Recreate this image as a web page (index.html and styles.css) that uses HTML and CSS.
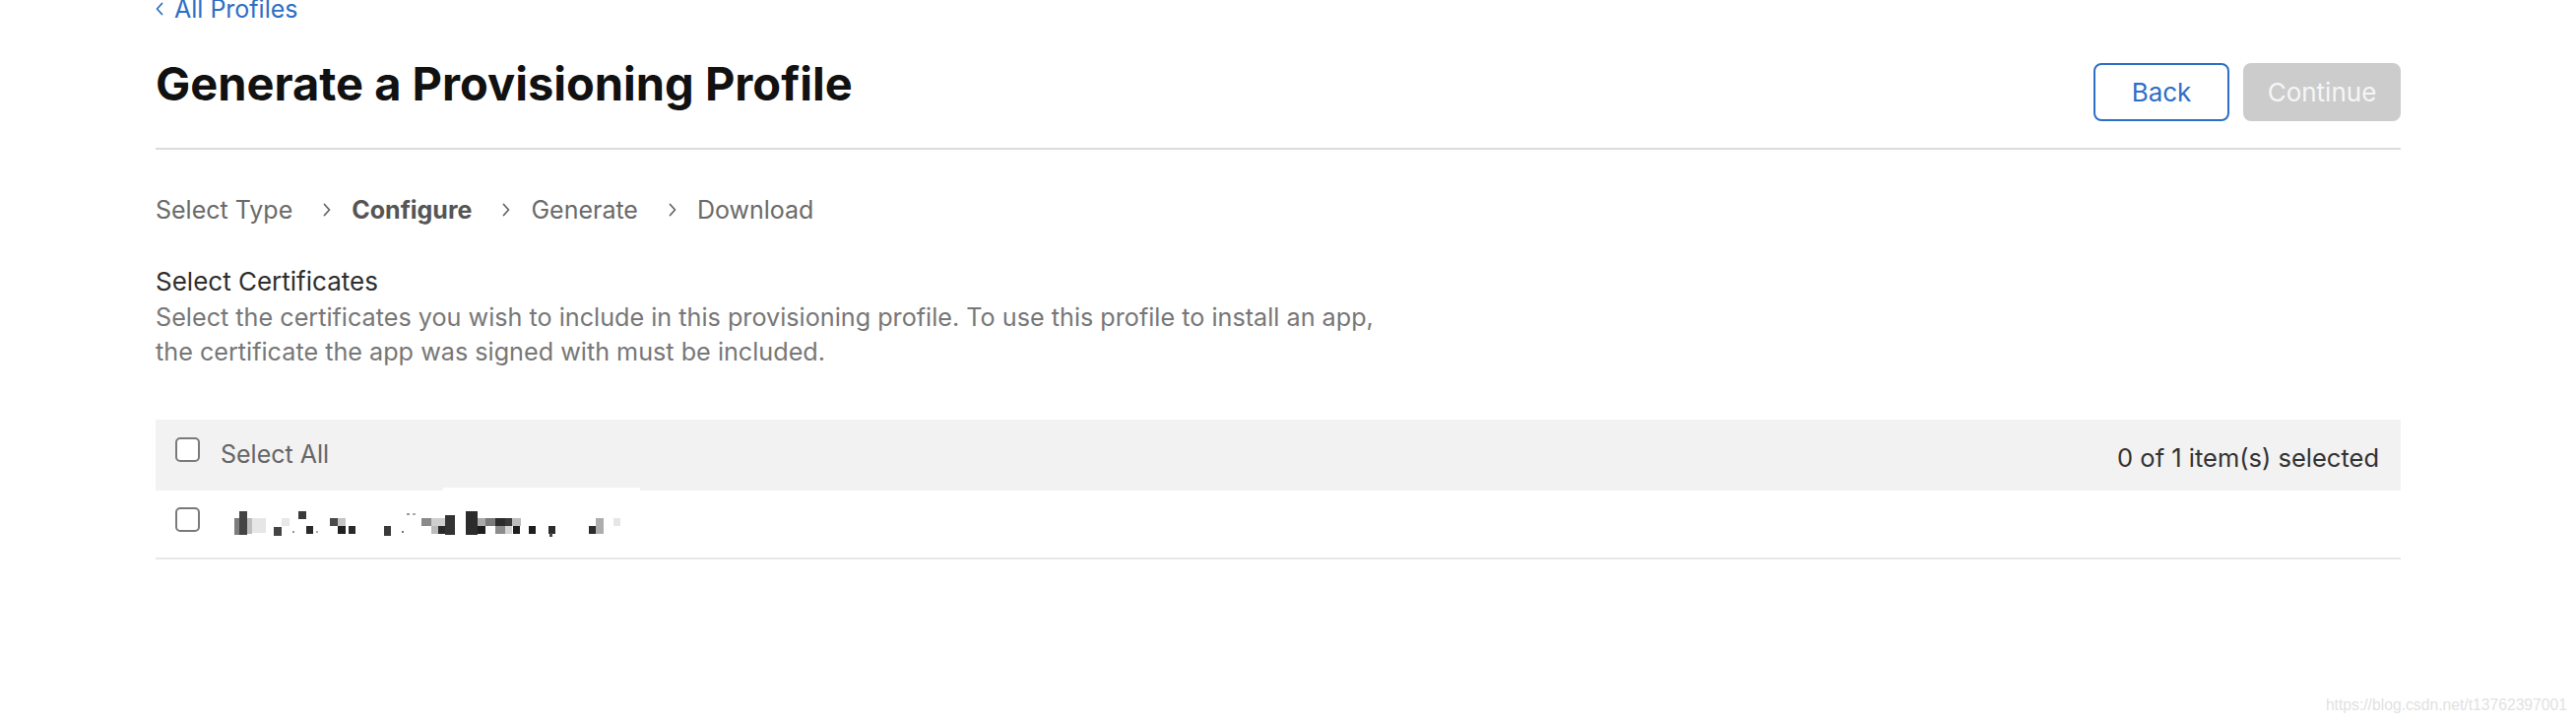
FILE: index.html
```html
<!DOCTYPE html>
<html lang="en">
<head>
<meta charset="utf-8">
<title>Generate a Provisioning Profile</title>
<link rel="stylesheet" href="styles.css">
</head>
<body>
<div class="page">
  <a class="back-link" href="#"><svg class="back-chevron" width="8" height="14" viewBox="0 0 8 14"><polyline points="6.5,1.5 1.5,7 6.5,12.5" fill="none" stroke="currentColor" stroke-width="1.8" stroke-linecap="round" stroke-linejoin="round"/></svg>All Profiles</a>

  <div class="title-row">
    <h1 class="title">Generate a Provisioning Profile</h1>
    <div class="actions">
      <button class="btn btn-outline" type="button">Back</button>
      <button class="btn btn-disabled" type="button">Continue</button>
    </div>
  </div>

  <nav class="steps">
    <span class="step">Select Type</span>
    <svg class="step-chevron" width="8" height="14" viewBox="0 0 8 14"><polyline points="1.5,1.5 6.5,7 1.5,12.5" fill="none" stroke="currentColor" stroke-width="1.8" stroke-linecap="round" stroke-linejoin="round"/></svg>
    <span class="step step-current">Configure</span>
    <svg class="step-chevron" width="8" height="14" viewBox="0 0 8 14"><polyline points="1.5,1.5 6.5,7 1.5,12.5" fill="none" stroke="currentColor" stroke-width="1.8" stroke-linecap="round" stroke-linejoin="round"/></svg>
    <span class="step">Generate</span>
    <svg class="step-chevron" width="8" height="14" viewBox="0 0 8 14"><polyline points="1.5,1.5 6.5,7 1.5,12.5" fill="none" stroke="currentColor" stroke-width="1.8" stroke-linecap="round" stroke-linejoin="round"/></svg>
    <span class="step">Download</span>
  </nav>

  <section class="section">
    <h2 class="section-title">Select Certificates</h2>
    <p class="section-desc">Select the certificates you wish to include in this provisioning profile. To use this profile to install an app,<br>the certificate the app was signed with must be included.</p>
  </section>

  <div class="table">
    <div class="table-head">
      <label class="check-label"><span class="checkbox"></span><span class="select-all">Select All</span></label>
      <span class="count">0 of 1 item(s) selected</span>
    </div>
    <div class="table-row">
      <span class="checkbox"></span>
      <svg class="mosaic" width="394" height="26" viewBox="0 0 394 26">
        <rect x="1" y="7" width="6" height="17" fill="#7d7d7d"/>
        <rect x="6" y="0" width="8" height="24" fill="#444"/>
        <rect x="14" y="7" width="5" height="16" fill="#bdbdbd"/>
        <rect x="19" y="7" width="14" height="15" fill="#e6e6e6"/>
        <rect x="41" y="16" width="8" height="9" fill="#444"/>
        <rect x="49" y="7" width="8" height="8" fill="#e8e8e8"/>
        <rect x="66" y="0" width="8" height="8" fill="#3a3a3a"/>
        <rect x="60" y="20" width="2" height="2" fill="#999"/>
        <rect x="74" y="15" width="7" height="8" fill="#2a2a2a"/>
        <rect x="84" y="20" width="2" height="2" fill="#aaa"/>
        <rect x="98" y="7" width="8" height="8" fill="#4a4a4a"/>
        <rect x="106" y="7" width="8" height="8" fill="#c4c4c4"/>
        <rect x="106" y="15" width="8" height="8" fill="#1f1f1f"/>
        <rect x="117" y="15" width="7" height="8" fill="#2a2a2a"/>
        <rect x="153" y="15" width="7" height="10" fill="#3a3a3a"/>
        <rect x="176" y="2" width="3" height="2" fill="#999"/>
        <rect x="182" y="2" width="3" height="2" fill="#aaa"/>
        <rect x="171" y="20" width="2" height="2" fill="#777"/>
        <rect x="191" y="7" width="10" height="8" fill="#8a8a8a"/>
        <rect x="201" y="7" width="14" height="8" fill="#cfcfcf"/>
        <rect x="201" y="15" width="7" height="8" fill="#bbb"/>
        <rect x="208" y="15" width="7" height="8" fill="#2a2a2a"/>
        <rect x="215" y="4" width="10" height="20" fill="#333"/>
        <rect x="236" y="0" width="12" height="24" fill="#2c2c2c"/>
        <rect x="248" y="7" width="8" height="8" fill="#aaa"/>
        <rect x="248" y="15" width="8" height="8" fill="#1e1e1e"/>
        <rect x="256" y="7" width="10" height="8" fill="#7a7a7a"/>
        <rect x="266" y="7" width="10" height="8" fill="#2c2c2c"/>
        <rect x="266" y="15" width="10" height="8" fill="#8c8c8c"/>
        <rect x="276" y="7" width="7" height="8" fill="#3a3a3a"/>
        <rect x="276" y="15" width="7" height="8" fill="#d4d4d4"/>
        <rect x="283" y="7" width="9" height="8" fill="#bdbdbd"/>
        <rect x="284" y="15" width="7" height="8" fill="#1e1e1e"/>
        <rect x="300" y="15" width="7" height="8" fill="#1e1e1e"/>
        <rect x="320" y="15" width="7" height="8" fill="#2c2c2c"/>
        <rect x="321" y="22" width="3" height="4" fill="#444"/>
        <rect x="361" y="15" width="7" height="8" fill="#2c2c2c"/>
        <rect x="368" y="7" width="8" height="16" fill="#adadad"/>
        <rect x="386" y="7" width="7" height="8" fill="#e6e6e6"/>
      </svg>
      <span class="redact-patch"></span>
    </div>
  </div>
</div>
<div class="watermark">https://blog.csdn.net/t13762397001</div>
</body>
</html>
```

FILE: styles.css
```css
html, body {
  margin: 0;
  padding: 0;
  background: #ffffff;
}

body {
  font-family: Inter, "Liberation Sans", sans-serif;
  color: #333;
  overflow: hidden;
  height: 734px;
  position: relative;
}

.page {
  padding: 0 178px 0 158px;
}

.back-link {
  display: flex;
  align-items: center;
  margin-top: -3px;
  height: 24px;
  font-size: 25px;
  line-height: 24px;
  color: #2d6ec6;
  text-decoration: none;
}

.back-chevron {
  margin-right: 11px;
  color: #2d6ec6;
}

.title-row {
  display: flex;
  justify-content: space-between;
  align-items: flex-start;
  margin-top: 35px;
  padding-bottom: 27px;
  border-bottom: 2px solid #dcdcdc;
}

.title {
  margin: 0;
  font-size: 47px;
  line-height: 58px;
  font-weight: 700;
  color: #111;
  letter-spacing: 0;
}

.actions {
  display: flex;
  gap: 14px;
  margin-top: 8px;
}

.btn {
  font-family: Inter, "Liberation Sans", sans-serif;
  font-size: 26px;
  height: 59px;
  border-radius: 8px;
  padding: 0;
  cursor: pointer;
}

.btn-outline {
  width: 138px;
  background: #fff;
  border: 2px solid #2d6ec6;
  color: #2d6ec6;
}

.btn-disabled {
  width: 160px;
  background: #cccccc;
  border: 2px solid #cccccc;
  color: #f6f6f6;
}

.steps {
  display: flex;
  align-items: center;
  margin-top: 46px;
  font-size: 25px;
  line-height: 30px;
  color: #6a6a6a;
}

.step-current {
  font-weight: 700;
  color: #555;
}

.step-chevron {
  color: #666;
  margin: 0 21px 0 31px;
}

.section {
  margin-top: 43px;
}

.section-title {
  margin: 0;
  font-size: 26px;
  line-height: 30px;
  font-weight: 400;
  color: #2e2e2e;
}

.section-desc {
  margin: 4px 0 0;
  font-size: 25.2px;
  line-height: 35px;
  color: #777;
}

.table {
  margin-top: 51px;
}

.table-head {
  display: flex;
  justify-content: space-between;
  align-items: flex-start;
  height: 72px;
  box-sizing: border-box;
  padding: 18px 22px 0 20px;
  background: #f2f2f2;
  font-size: 25px;
  line-height: 30px;
}

.check-label {
  display: flex;
  align-items: flex-start;
}

.checkbox {
  display: block;
  width: 25px;
  height: 25px;
  box-sizing: border-box;
  border: 2px solid #7a7a7a;
  border-radius: 5px;
  background: #fff;
  flex: none;
}

.select-all {
  margin: 2px 0 0 21px;
  color: #666;
}

.count {
  margin-top: 6px;
  font-size: 25.5px;
  color: #333;
}

.table-row {
  position: relative;
  display: flex;
  align-items: flex-start;
  height: 70px;
  box-sizing: border-box;
  padding: 17px 20px 0 20px;
  border-bottom: 2px solid #e8e8e8;
}

.mosaic {
  margin: 4px 0 0 34px;
  display: block;
}

.redact-patch {
  position: absolute;
  left: 292px;
  top: -3px;
  width: 200px;
  height: 3px;
  background: #fff;
}

.watermark {
  position: absolute;
  right: 9px;
  bottom: 9px;
  font-family: "Liberation Sans", Arial, sans-serif;
  font-size: 15.7px;
  color: #e2e2e2;
}
```
